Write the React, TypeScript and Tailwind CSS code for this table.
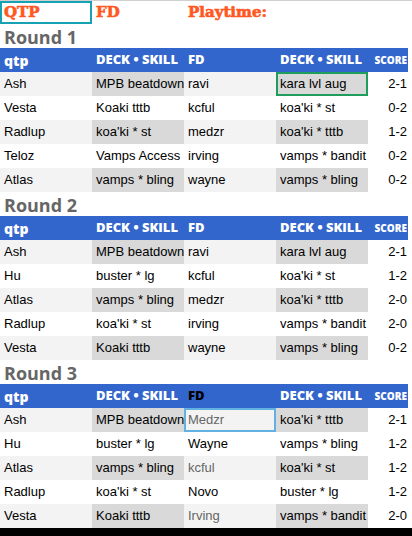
import React from 'react'

type Row = [string, string, string, string, string]

const round1: Row[] = [
  ['Ash', 'MPB beatdown', 'ravi', 'kara lvl aug', '2-1'],
  ['Vesta', 'Koaki tttb', 'kcful', "koa'ki * st", '0-2'],
  ['Radlup', "koa'ki * st", 'medzr', "koa'ki * tttb", '1-2'],
  ['Teloz', 'Vamps Access', 'irving', 'vamps * bandit', '0-2'],
  ['Atlas', 'vamps * bling', 'wayne', 'vamps * bling', '0-2'],
]

const round2: Row[] = [
  ['Ash', 'MPB beatdown', 'ravi', 'kara lvl aug', '2-1'],
  ['Hu', 'buster * lg', 'kcful', "koa'ki * st", '1-2'],
  ['Atlas', 'vamps * bling', 'medzr', "koa'ki * tttb", '2-0'],
  ['Radlup', "koa'ki * st", 'irving', 'vamps * bandit', '2-0'],
  ['Vesta', 'Koaki tttb', 'wayne', 'vamps * bling', '0-2'],
]

const round3: Row[] = [
  ['Ash', 'MPB beatdown', 'Medzr', "koa'ki * tttb", '2-1'],
  ['Hu', 'buster * lg', 'Wayne', 'vamps * bling', '1-2'],
  ['Atlas', 'vamps * bling', 'kcful', "koa'ki * st", '1-2'],
  ['Radlup', "koa'ki * st", 'Novo', 'buster * lg', '1-2'],
  ['Vesta', 'Koaki tttb', 'Irving', 'vamps * bandit', '2-0'],
]

const head = "font-['Open_Sans',sans-serif] font-extrabold text-white"

function RoundTable({ title, rows, round }: { title: string; rows: Row[]; round: number }) {
  return (
    <div>
      <div className="flex h-6 items-end px-1 font-['Open_Sans',sans-serif] text-[18px] font-bold leading-[22px] text-[#666]">
        {title}
      </div>
      <div className="grid w-[408px] grid-cols-[92px_92px_92px_92px_40px] font-['Liberation_Sans',Arial,sans-serif] text-[13px] text-black">
        <div className={`flex h-6 items-center bg-[#3366cc] px-1 text-[14px] ${head}`}>qtp</div>
        <div className={`flex h-6 items-center whitespace-nowrap bg-[#3366cc] px-1 text-[13px] ${head}`}>DECK • SKILL</div>
        <div className={`flex h-6 items-center bg-[#3366cc] px-1 text-[13px] font-['Open_Sans',sans-serif] font-extrabold ${round === 3 ? 'text-black' : 'text-white'}`}>
          FD
        </div>
        <div className={`flex h-6 items-center whitespace-nowrap bg-[#3366cc] px-1 text-[13px] ${head}`}>DECK • SKILL</div>
        <div className={`flex h-6 items-center justify-end bg-[#3366cc] pr-px text-[10px] ${head}`}>SCORE</div>

        {rows.map((r, i) => {
          const odd = i % 2 === 0
          const light = odd ? 'bg-[#f3f3f3]' : 'bg-white'
          const dark = odd ? 'bg-[#d9d9d9]' : 'bg-white'
          const fdText = round === 3 && odd ? 'text-[#666]' : 'text-black'
          const fdRing = round === 3 && i === 0 ? 'ring-2 ring-inset ring-[#62b1e0]' : ''
          const deckRing = round === 1 && i === 0 ? 'ring-2 ring-inset ring-[#1f9d5c]' : ''
          return (
            <React.Fragment key={i}>
              <div className={`flex h-6 items-center whitespace-nowrap px-1 ${light}`}>{r[0]}</div>
              <div className={`flex h-6 items-center overflow-hidden whitespace-nowrap px-1 ${dark}`}>{r[1]}</div>
              <div className={`flex h-6 items-center whitespace-nowrap px-1 ${light} ${fdText} ${fdRing}`}>{r[2]}</div>
              <div className={`flex h-6 items-center overflow-hidden whitespace-nowrap px-1 ${dark} ${deckRing}`}>{r[3]}</div>
              <div className="flex h-6 items-center justify-end bg-white pr-px">{r[4]}</div>
            </React.Fragment>
          )
        })}
      </div>
    </div>
  )
}

export default function App() {
  return (
    <div className="h-[536px] w-[412px] overflow-hidden border-t border-[#d0d0d0] bg-white">
      <div className="grid h-[23px] grid-cols-[92px_92px_92px_1fr] font-['DejaVu_Serif',serif] text-[15px] font-bold text-[#ff5722] [-webkit-text-stroke:0.6px_#ff5722]">
        <div className="flex items-center border-2 border-[#17a2b4] px-[2px] leading-none">QTP</div>
        <div className="flex items-center px-1 leading-none">FD</div>
        <div className="flex items-center px-1 leading-none">Playtime:</div>
        <div />
      </div>
      <RoundTable title="Round 1" rows={round1} round={1} />
      <RoundTable title="Round 2" rows={round2} round={2} />
      <RoundTable title="Round 3" rows={round3} round={3} />
      <div className="h-2 bg-black" />
    </div>
  )
}
